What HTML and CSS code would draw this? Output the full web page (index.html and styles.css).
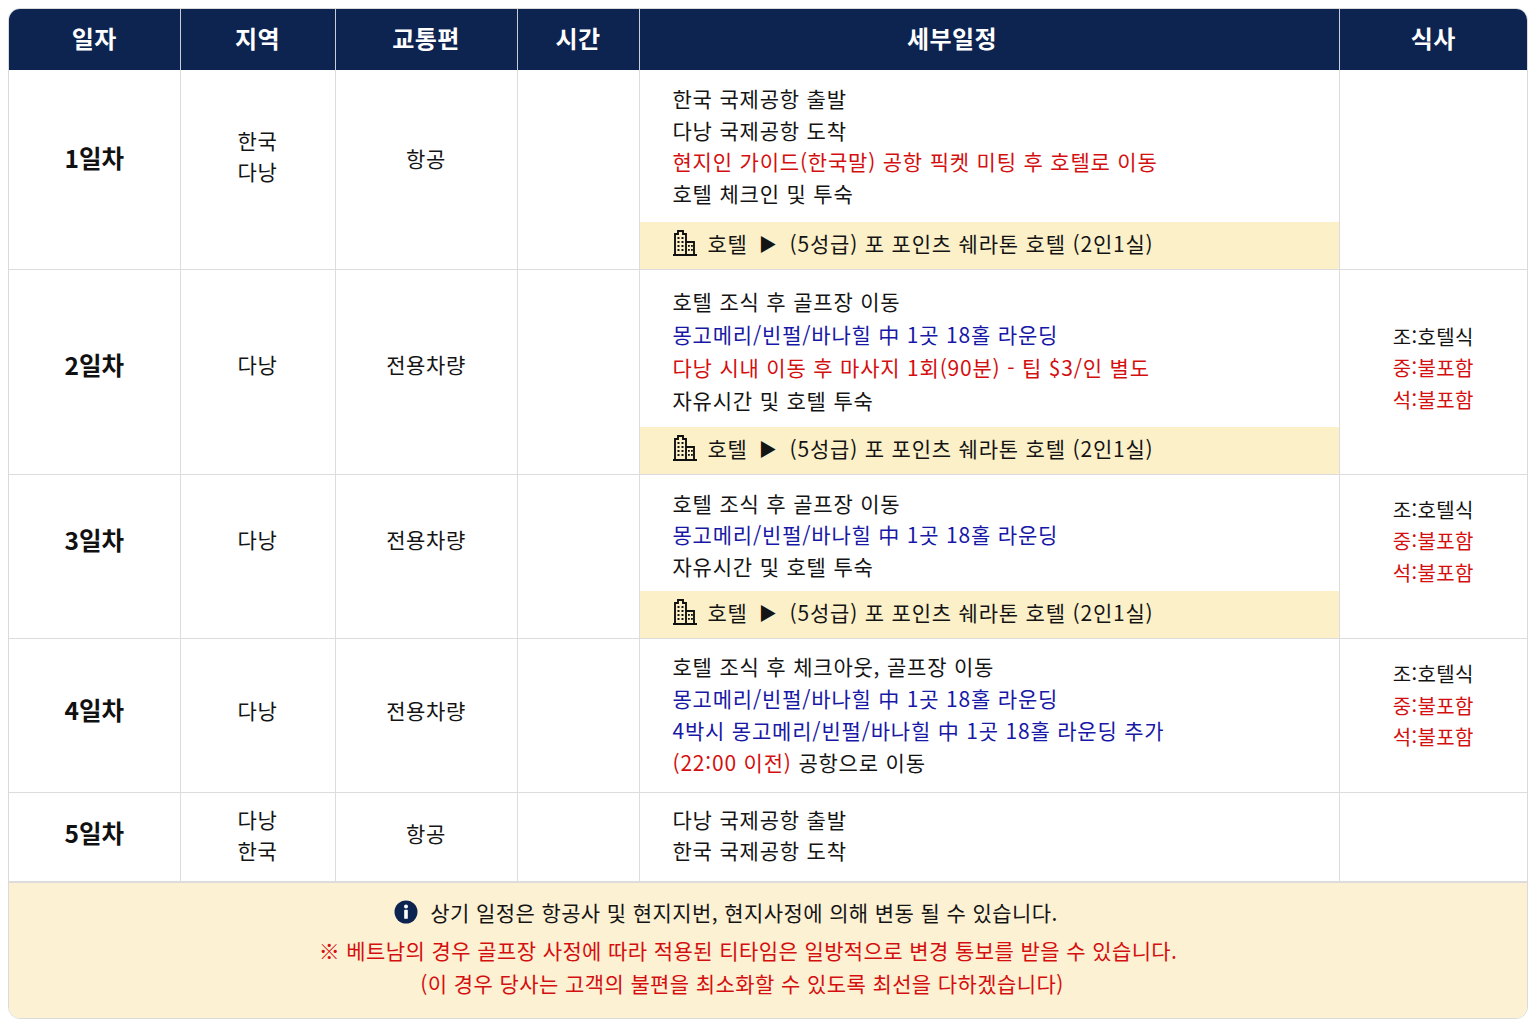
FILE: index.html
```html
<!DOCTYPE html>
<html lang="ko">
<head>
<meta charset="utf-8">
<link rel="stylesheet" href="styles.css">
</head>
<body>
<div class="sheet">
  <table class="sched">
    <colgroup>
      <col class="c-day"><col class="c-area"><col class="c-trans"><col class="c-time"><col class="c-detail"><col class="c-meal">
    </colgroup>
    <thead>
      <tr>
        <th>일자</th><th>지역</th><th>교통편</th><th>시간</th><th class="th-detail">세부일정</th><th>식사</th>
      </tr>
    </thead>
    <tbody>
      <tr class="r1">
        <td class="day">1일차</td>
        <td class="area">한국<br>다낭</td>
        <td class="trans">항공</td>
        <td></td>
        <td class="detail">
          <div class="lines">
            <div>한국 국제공항 출발</div>
            <div>다낭 국제공항 도착</div>
            <div class="red">현지인 가이드(한국말) 공항 픽켓 미팅 후 호텔로 이동</div>
            <div>호텔 체크인 및 투숙</div>
          </div>
          <div class="hotel"><svg class="bld" viewBox="0 0 26 26" width="26" height="26"><path d="M3 25V4h3V1h5v3h3v21M14 25V12h8v13M1 25h24" fill="none" stroke="#111" stroke-width="1.9"/><g fill="#111"><rect x="5.5" y="7" width="2" height="2"/><rect x="9.5" y="7" width="2" height="2"/><rect x="5.5" y="11" width="2" height="2"/><rect x="9.5" y="11" width="2" height="2"/><rect x="5.5" y="15" width="2" height="2"/><rect x="9.5" y="15" width="2" height="2"/><rect x="5.5" y="19" width="2" height="2"/><rect x="9.5" y="19" width="2" height="2"/><rect x="16" y="15" width="1.8" height="1.8"/><rect x="19" y="15" width="1.8" height="1.8"/><rect x="16" y="19" width="1.8" height="1.8"/><rect x="19" y="19" width="1.8" height="1.8"/></g></svg><span>호텔</span><span class="tri">▶</span><span>(5성급) 포 포인츠 쉐라톤 호텔 (2인1실)</span></div>
        </td>
        <td class="meal"></td>
      </tr>
      <tr class="r2">
        <td class="day">2일차</td>
        <td class="area">다낭</td>
        <td class="trans">전용차량</td>
        <td></td>
        <td class="detail">
          <div class="lines">
            <div>호텔 조식 후 골프장 이동</div>
            <div class="blue">몽고메리/빈펄/바나힐 中 1곳 18홀 라운딩</div>
            <div class="red">다낭 시내 이동 후 마사지 1회(90분) - 팁 $3/인 별도</div>
            <div>자유시간 및 호텔 투숙</div>
          </div>
          <div class="hotel"><svg class="bld" viewBox="0 0 26 26" width="26" height="26"><path d="M3 25V4h3V1h5v3h3v21M14 25V12h8v13M1 25h24" fill="none" stroke="#111" stroke-width="1.9"/><g fill="#111"><rect x="5.5" y="7" width="2" height="2"/><rect x="9.5" y="7" width="2" height="2"/><rect x="5.5" y="11" width="2" height="2"/><rect x="9.5" y="11" width="2" height="2"/><rect x="5.5" y="15" width="2" height="2"/><rect x="9.5" y="15" width="2" height="2"/><rect x="5.5" y="19" width="2" height="2"/><rect x="9.5" y="19" width="2" height="2"/><rect x="16" y="15" width="1.8" height="1.8"/><rect x="19" y="15" width="1.8" height="1.8"/><rect x="16" y="19" width="1.8" height="1.8"/><rect x="19" y="19" width="1.8" height="1.8"/></g></svg><span>호텔</span><span class="tri">▶</span><span>(5성급) 포 포인츠 쉐라톤 호텔 (2인1실)</span></div>
        </td>
        <td class="meal"><div>조:호텔식</div><div class="red">중:불포함</div><div class="red">석:불포함</div></td>
      </tr>
      <tr class="r3">
        <td class="day">3일차</td>
        <td class="area">다낭</td>
        <td class="trans">전용차량</td>
        <td></td>
        <td class="detail">
          <div class="lines">
            <div>호텔 조식 후 골프장 이동</div>
            <div class="blue">몽고메리/빈펄/바나힐 中 1곳 18홀 라운딩</div>
            <div>자유시간 및 호텔 투숙</div>
          </div>
          <div class="hotel"><svg class="bld" viewBox="0 0 26 26" width="26" height="26"><path d="M3 25V4h3V1h5v3h3v21M14 25V12h8v13M1 25h24" fill="none" stroke="#111" stroke-width="1.9"/><g fill="#111"><rect x="5.5" y="7" width="2" height="2"/><rect x="9.5" y="7" width="2" height="2"/><rect x="5.5" y="11" width="2" height="2"/><rect x="9.5" y="11" width="2" height="2"/><rect x="5.5" y="15" width="2" height="2"/><rect x="9.5" y="15" width="2" height="2"/><rect x="5.5" y="19" width="2" height="2"/><rect x="9.5" y="19" width="2" height="2"/><rect x="16" y="15" width="1.8" height="1.8"/><rect x="19" y="15" width="1.8" height="1.8"/><rect x="16" y="19" width="1.8" height="1.8"/><rect x="19" y="19" width="1.8" height="1.8"/></g></svg><span>호텔</span><span class="tri">▶</span><span>(5성급) 포 포인츠 쉐라톤 호텔 (2인1실)</span></div>
        </td>
        <td class="meal"><div>조:호텔식</div><div class="red">중:불포함</div><div class="red">석:불포함</div></td>
      </tr>
      <tr class="r4">
        <td class="day">4일차</td>
        <td class="area">다낭</td>
        <td class="trans">전용차량</td>
        <td></td>
        <td class="detail">
          <div class="lines">
            <div>호텔 조식 후 체크아웃, 골프장 이동</div>
            <div class="blue">몽고메리/빈펄/바나힐 中 1곳 18홀 라운딩</div>
            <div class="blue">4박시 몽고메리/빈펄/바나힐 中 1곳 18홀 라운딩 추가</div>
            <div><span class="red">(22:00 이전)</span> 공항으로 이동</div>
          </div>
        </td>
        <td class="meal"><div>조:호텔식</div><div class="red">중:불포함</div><div class="red">석:불포함</div></td>
      </tr>
      <tr class="r5">
        <td class="day">5일차</td>
        <td class="area">다낭<br>한국</td>
        <td class="trans">항공</td>
        <td></td>
        <td class="detail">
          <div class="lines">
            <div>다낭 국제공항 출발</div>
            <div>한국 국제공항 도착</div>
          </div>
        </td>
        <td class="meal"></td>
      </tr>
    </tbody>
  </table>
  <div class="notice">
    <div class="n1"><svg class="info" viewBox="0 0 24 24" width="24" height="24"><circle cx="12" cy="12" r="11.5" fill="#0d2350"/><circle cx="12" cy="6.6" r="2" fill="#fff"/><rect x="10.2" y="9.8" width="3.6" height="9" rx="0.6" fill="#fff"/></svg><span>상기 일정은 항공사 및 현지지번, 현지사정에 의해 변동 될 수 있습니다.</span></div>
    <div class="n2 red">※ 베트남의 경우 골프장 사정에 따라 적용된 티타임은 일방적으로 변경 통보를 받을 수 있습니다.</div>
    <div class="n3 red">(이 경우 당사는 고객의 불편을 최소화할 수 있도록 최선을 다하겠습니다)</div>
  </div>
</div>
</body>
</html>
```

FILE: styles.css
```css
* { box-sizing: border-box; }
html, body { background: #ffffff; }
body {
  margin: 8px;
  font-family: "Noto Sans CJK KR", "Noto Sans", sans-serif;
  color: #141414;
}
.sheet {
  width: 1520px;
  border: 1px solid #dadada;
  border-radius: 12px;
  overflow: hidden;
  background: #fff;
}
.sched {
  width: 100%;
  border-collapse: collapse;
  table-layout: fixed;
}
.c-day { width: 171px; }
.c-area { width: 155px; }
.c-trans { width: 182px; }
.c-time { width: 122px; }
.c-detail { width: 700px; }
.c-meal { width: 188px; }

.sched th {
  height: 61px;
  background: #0d2350;
  color: #fff;
  font-size: 24px;
  font-weight: 700;
  letter-spacing: 0.02em;
  text-align: center;
  border-left: 1px solid #c9cdd6;
  padding: 0 0 4px 0;
}
.sched th:first-child { border-left: none; }
.sched .th-detail { padding-right: 74px; }

.sched td {
  border: 1px solid #dcdcdc;
  padding: 0;
  text-align: center;
  vertical-align: middle;
  font-size: 21px;
  line-height: 31px;
  letter-spacing: 0.6px;
}
.sched tr td:first-child { border-left: none; }
.sched tr td:last-child { border-right: none; }
.sched tbody tr:first-child td { border-top: none; }

.sched .day { font-size: 24.5px; font-weight: 700; color: #111; letter-spacing: 0; }

.sched .detail { text-align: left; vertical-align: top; padding: 0; letter-spacing: 0.8px; }
.lines { line-height: 31.7px; padding: 13px 20px 12px 33px; }
.r2 .lines { padding-top: 15px; padding-bottom: 10px; line-height: 33px; }
.r3 .lines { padding-top: 13px; padding-bottom: 8px; line-height: 31.6px; }
.r4 .lines { padding-top: 11px; padding-bottom: 14px; line-height: 32.2px; }
.r5 .lines { padding-top: 11px; padding-bottom: 15px; line-height: 31px; }

.hotel {
  height: 47px;
  background: #fcf0c9;
  display: flex;
  align-items: center;
  gap: 9px;
  padding-left: 32px;
  padding-bottom: 4px;
}
.hotel .bld { flex: none; margin-right: 1px; }
.hotel .tri { font-size: 18px; margin: 0 3px 0 2px; }

.r1 .day { padding-bottom: 23px; }
.r1 .area { padding-bottom: 27px; }
.r1 .trans { padding-bottom: 21px; }
.r2 .day, .r2 .area, .r2 .trans { padding-bottom: 15px; }
.r3 .day, .r3 .area, .r3 .trans { padding-bottom: 33px; }
.r4 .day { padding-bottom: 12px; }
.r4 .area, .r4 .trans { padding-bottom: 10px; }
.r5 .day { padding-bottom: 9px; }
.r5 .area { padding-bottom: 5px; }
.r5 .trans { padding-bottom: 7px; }

.sched .meal { font-size: 20px; line-height: 31.5px; letter-spacing: 0.02em; }
.r2 .meal { padding-bottom: 8px; }
.r3 .meal { padding-bottom: 30px; }
.r4 .meal { padding-bottom: 20px; }

.red { color: #d40f0f; }
.blue { color: #1818a6; }

.notice {
  background: #fdf1d4;
  border-top: 1px solid #dcdcdc;
  text-align: center;
  padding: 13px 40px 19px 0;
  font-size: 21px;
  letter-spacing: 0.4px;
}
.n1 { display: flex; justify-content: center; align-items: center; gap: 12px; line-height: 32px; padding-right: 44px; }
.info { flex: none; }
.n2 { line-height: 32px; margin-top: 6px; }
.n3 { line-height: 32px; margin-top: 1px; padding-right: 12px; }
```
